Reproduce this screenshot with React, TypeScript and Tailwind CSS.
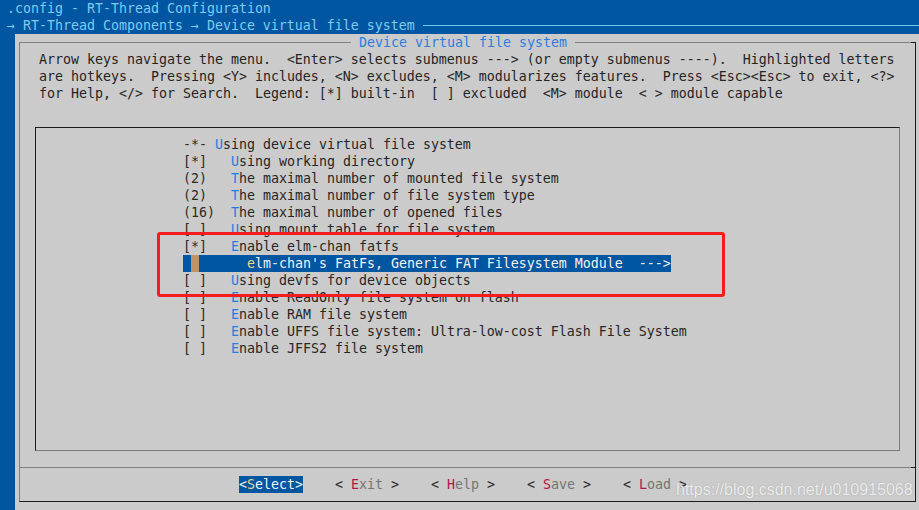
import React from "react";

type Item = { pre: string; hot: string; rest: string };

const items: (Item | null)[] = [
  { pre: "-*- ", hot: "U", rest: "sing device virtual file system" },
  { pre: "[*]   ", hot: "U", rest: "sing working directory" },
  { pre: "(2)   ", hot: "T", rest: "he maximal number of mounted file system" },
  { pre: "(2)   ", hot: "T", rest: "he maximal number of file system type" },
  { pre: "(16)  ", hot: "T", rest: "he maximal number of opened files" },
  { pre: "[ ]   ", hot: "U", rest: "sing mount table for file system" },
  { pre: "[*]   ", hot: "E", rest: "nable elm-chan fatfs" },
  null,
  { pre: "[ ]   ", hot: "U", rest: "sing devfs for device objects" },
  { pre: "[ ]   ", hot: "E", rest: "nable ReadOnly file system on flash" },
  { pre: "[ ]   ", hot: "E", rest: "nable RAM file system" },
  { pre: "[ ]   ", hot: "E", rest: "nable UFFS file system: Ultra-low-cost Flash File System" },
  { pre: "[ ]   ", hot: "E", rest: "nable JFFS2 file system" },
];

const helpLines = [
  "Arrow keys navigate the menu.  <Enter> selects submenus ---> (or empty submenus ----).  Highlighted letters",
  "are hotkeys.  Pressing <Y> includes, <N> excludes, <M> modularizes features.  Press <Esc><Esc> to exit, <?>",
  "for Help, </> for Search.  Legend: [*] built-in  [ ] excluded  <M> module  < > module capable",
];

const buttons = [
  { hot: "E", rest: "xit" },
  { hot: "H", rest: "elp" },
  { hot: "S", rest: "ave" },
  { hot: "L", rest: "oad" },
];

export default function App() {
  return (
    <div className="relative w-[919px] h-[510px] overflow-hidden bg-[#0056a0] flex flex-col font-['DejaVu_Sans_Mono',monospace] text-[13.29px] leading-[17px] whitespace-pre">
      {/* header */}
      <div className="h-[17px] pl-[7px] text-[#7fcaf2]">.config - RT-Thread Configuration</div>
      <div className="h-[17px] pl-[7px] flex items-center text-[#7fcaf2]">
        <span>→ RT-Thread Components → Device virtual file system </span>
        <div className="flex-1 h-px bg-[#6ec8f6]" />
      </div>

      {/* main */}
      <div className="flex-1 flex">
        <div className="w-[15px]" />
        <div className="flex-1 bg-[#cbcbcb] pt-[8px] pl-[4px]">
          <div className="w-[897px] h-[460px] box-border border-l border-r border-b border-l-[#808080] border-r-[#1c1c1c] border-b-[#1c1c1c] flex flex-col">
            {/* title row */}
            <div className="h-[17px] -mt-[8px] flex items-center">
              <div className="w-[331px] h-px bg-[#808080]" />
              <span className="text-[#2a7de1]"> Device virtual file system </span>
              <div className="flex-1 h-px bg-[#808080]" />
              <div className="w-[4px] h-px bg-[#1c1c1c]" />
            </div>

            {/* help */}
            <div className="pl-[19px] text-[#242424]">
              {helpLines.map((l, i) => (
                <div key={i} className="h-[17px]">{l}</div>
              ))}
            </div>

            {/* menu box */}
            <div className="ml-[15px] mt-[25px] w-[865px] h-[324px] box-border border border-l-[#1c1c1c] border-t-[#1c1c1c] border-r-[#7c7c7c] border-b-[#7c7c7c] pt-[8px] pl-[147px]">
              {items.map((it, i) =>
                it ? (
                  <div key={i} className="h-[17px] text-[#262626]">
                    <span className="text-[#2e2a22]">{it.pre}</span>
                    <span className="text-[#1f7fe0]">{it.hot}</span>
                    <span>{it.rest}</span>
                  </div>
                ) : (
                  <div key={i} className="h-[17px] flex">
                    <div className="bg-[#0056a0] text-[#f2f2f2] flex">
                      <span> </span>
                      <span className="bg-[#c0946a]"> </span>
                      <span>      </span>
                      <span className="text-[#e6d98a]">e</span>
                      <span>lm-chan's FatFs, Generic FAT Filesystem Module  ---&gt;</span>
                    </div>
                  </div>
                )
              )}
            </div>

            {/* separator */}
            <div className="mt-[16px] h-px flex">
              <div className="flex-1 bg-[#808080]" />
              <div className="w-[4px] bg-[#1c1c1c]" />
            </div>

            {/* buttons */}
            <div className="mt-[8px] h-[17px] pl-[219px] flex gap-[32px]">
              <span className="bg-[#0056a0] text-[#f4f4f4]">
                &lt;<span className="text-[#e6d98a]">S</span>elect&gt;
              </span>
              {buttons.map((b) => (
                <span key={b.hot} className="text-[#1e1e1e]">
                  {"< "}
                  <span className="text-[#b3124c]">{b.hot}</span>
                  <span className="text-[#747474]">{b.rest}</span>
                  {" >"}
                </span>
              ))}
            </div>
          </div>
        </div>
      </div>

      {/* red annotation rectangle */}
      <div className="absolute left-[157px] top-[232px] w-[568px] h-[65px] border-[3px] border-[#f41c1c] rounded-[3px]" />

      {/* watermark */}
      <div className="absolute left-[676px] top-[481px] font-['Liberation_Sans',Arial,sans-serif] text-[16px] leading-[18px] text-[#ebebeb] [text-shadow:0_0_1px_rgba(120,120,120,0.5)]">
        https://blog.csdn.net/u010915068
      </div>
    </div>
  );
}
